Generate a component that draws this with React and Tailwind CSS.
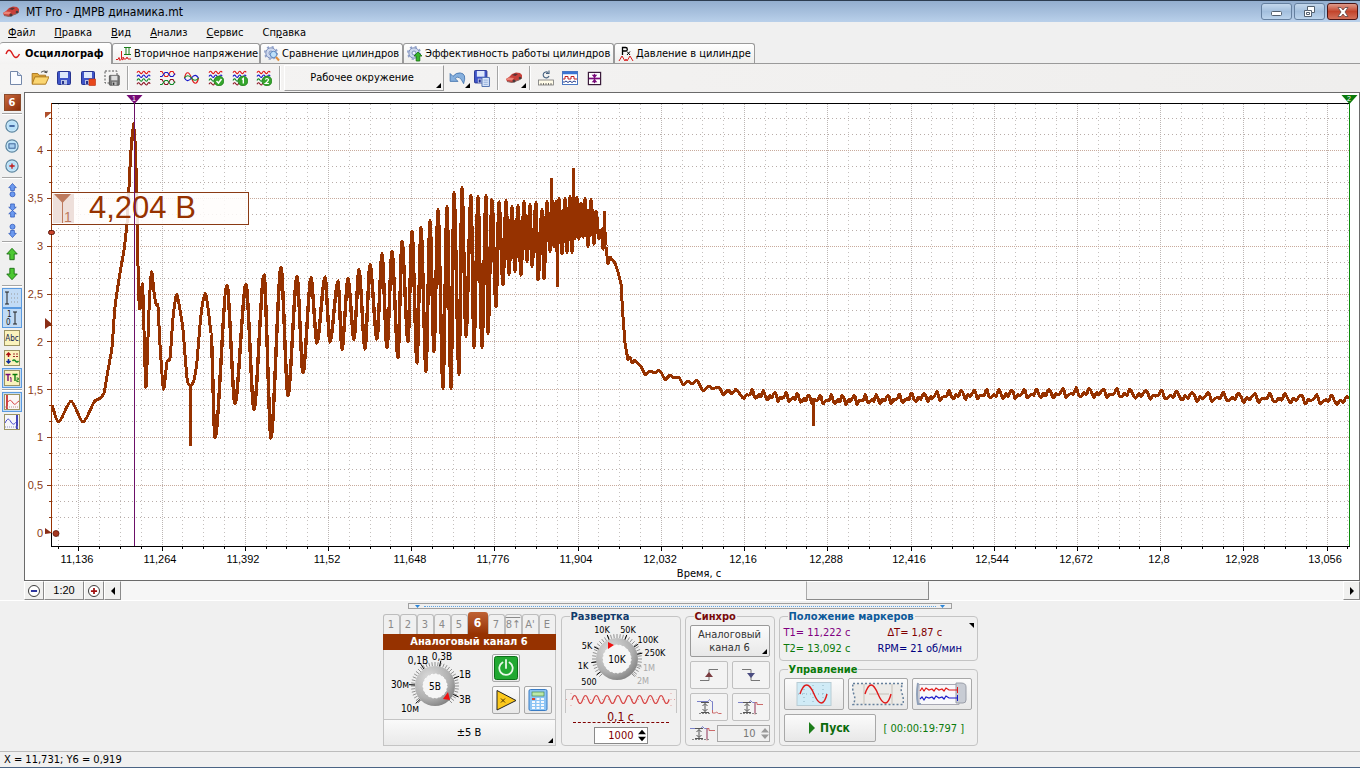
import React from "react";

/* ---------- signal ---------- */
const HEAD = [
  [52, 405], [59, 422], [71, 401], [83, 422], [94, 402], [99, 399], [104, 393], [108, 370], [112, 347],
  [115, 307], [120, 273], [124, 250], [127, 223], [129, 187], [131, 150], [133.500, 123], [135.500, 150],
  [136.500, 190], [137.500, 237], [138.500, 290], [140, 309], [142.500, 284], [144, 330], [146, 387], [149, 310], [151.500, 272],
  [154, 292], [156, 304], [158, 307], [160, 345], [163.500, 389], [167, 362], [170, 358], [173, 318], [176.500, 295], [179, 304], [183, 330],
  [187, 378], [190.500, 386], [194, 380], [197, 361], [201, 315], [205, 294], [207.500, 304], [211, 333],
];
const SWING = [
  [215, 438], [227, 285], [235, 404], [246, 284], [254, 410], [264, 275], [271, 438], [281, 267],
  [288, 396], [297, 276], [303, 373], [311, 278], [317, 343], [325, 277], [330, 342], [338, 281],
  [342, 349], [348, 279], [354, 339], [359, 270], [365, 349], [370, 265], [377, 339], [382, 254],
  [387, 348], [392, 251], [398, 358], [402, 241], [408, 342], [412, 231], [417, 363], [421, 228],
  [426, 371], [430, 221], [434, 351], [438, 210], [443, 388], [447, 207], [451, 388], [454, 193],
  [459, 374], [462, 188], [466, 336], [471, 196], [474, 347], [478, 197], [482, 347], [486, 196],
  [488, 333], [492, 200], [496, 307], [499, 202], [503, 285], [506, 201], [509, 274], [512, 207],
  [515, 271], [518, 206], [521, 275], [524, 202], [527, 261], [530, 205], [532, 266], [536, 203],
  [538, 280], [542, 210], [544, 279], [547, 202], [550, 251], [552, 200], [554, 246], [556, 202],
  [557, 252], [559, 199], [562, 254], [565, 199], [567, 252], [570, 197], [572, 252], [574, 197],
  [575, 238], [577, 198], [579, 239], [581, 203], [583, 237], [585, 199], [588, 246], [591, 200],
  [594, 244], [596, 211], [599, 239], [602, 229], [603, 249], [605, 232], [606, 247],
];
const FALL = [
  [606, 247], [608, 264], [610, 257], [615, 263], [618, 272], [621, 284], [623, 317], [625, 343], [628, 360], [630, 357],
  [632, 363], [635, 360], [638, 364], [641, 366], [645, 375], [650, 371], [655, 373], [659, 370], [662, 374], [665, 380], [670, 375],
  [674, 378], [679, 377], [683, 385], [688, 381], [692, 384], [697, 380], [703, 391], [709, 386], [713, 389],
  [717, 387], [720, 388], [723, 395], [728, 390], [732, 394], [736, 389], [743, 398],
];
const SPIKES = "M190.500 386V446M551.500 178V240M557.500 240V287M573.500 168V240M604.500 211V245M813.500 398V426";
const BASE = [[743, 394], [780, 397], [820, 400], [860, 400], [900, 399], [960, 395], [1040, 394], [1085, 393], [1130, 394], [1200, 397], [1300, 399], [1350, 401]];

function baseline(x) {
  for (let i = 1; i < BASE.length; i++) {
    if (x <= BASE[i][0]) {
      const [x0, y0] = BASE[i - 1];
      const [x1, y1] = BASE[i];
      return y0 + ((x - x0) / (x1 - x0)) * (y1 - y0);
    }
  }
  return 401;
}

function smooth(pts) {
  let d = "M" + pts[0].join(",");
  for (let i = 1; i < pts.length; i++) {
    const a = pts[i - 1];
    const b = pts[i];
    const z = pts[i - 2] || a;
    const n = pts[i + 1] || b;
    d += `C${a[0] + (b[0] - z[0]) / 8},${a[1] + (b[1] - z[1]) / 8} ${b[0] - (n[0] - a[0]) / 8},${b[1] - (n[1] - a[1]) / 8} ${b[0]},${b[1]}`;
  }
  return d;
}

function buildSwing() {
  let prev = HEAD[HEAD.length - 1];
  let d = "M" + prev.join(",");
  SWING.forEach(([x, y]) => {
    const dx = (x - prev[0]) * 0.28;
    d += `C${prev[0] + dx},${prev[1]} ${x - dx},${y} ${x},${y}`;
    prev = [x, y];
  });
  return d;
}

function buildTail() {
  let d = "M" + FALL.map((p) => p.join(",")).join("L");
  let phase = 0;
  for (let x = 744; x < 1350; x += 1) {
    const period = x < 900 ? 11.3 : x < 1050 ? 12.5 : x < 1130 ? 13.5 : 15.5;
    phase += (2 * Math.PI) / period;
    const y = baseline(x) + 2.7 * Math.sin(phase) + 2.2 * Math.sin(phase * 2 + 0.5) + 0.7 * Math.sin(phase * 3.3);
    d += `L${x},${y.toFixed(1)}`;
  }
  return d;
}
const HEAD_PATH = smooth(HEAD);
const SWING_PATH = buildSwing();
const TAIL_PATH = buildTail();

const X_LABELS = ["11,136", "11,264", "11,392", "11,52", "11,648", "11,776", "11,904", "12,032", "12,16", "12,288", "12,416", "12,544", "12,672", "12,8", "12,928", "13,056"];
const Y_LABELS = ["4", "3,5", "3", "2,5", "2", "1,5", "1", "0,5", "0"];
const V_LINES = Array.from({ length: 63 }, (_, i) => ({ x: Math.round(57.5 + i * 20.805), major: i % 4 === 1 })).filter((l) => l.x < 1349);
const H_LINES = Array.from({ length: 27 }, (_, i) => ({ y: Math.round(118 + i * 15.96), major: i % 3 === 2 }));

function Chart() {
  return (
    <svg viewBox="25 93 1334 487" className="block w-full bg-white" role="img" aria-label="Осциллограмма">
      <g shapeRendering="crispEdges" fill="none">
        {V_LINES.map(({ x, major }) => (
          <g key={x}>
            <path d={`M${x + 0.5} 104V546`} stroke={major ? "#bcb6b4" : "#c4c0be"} strokeDasharray={major ? "1 1" : "1 3"} />
            <path d={`M${x + 0.5} 547v${major ? 4 : 2}`} stroke="#000" />
          </g>
        ))}
        {H_LINES.map(({ y, major }) => (
          <g key={y}>
            {y < 530 && <path d={`M52 ${y + 0.5}H1349`} stroke={major ? "#c8aa9c" : "#b8aca8"} strokeDasharray={major ? "1 1" : "1 3"} />}
            {y < 530 && <path d={`M${major ? 47 : 49} ${y + 0.5}H52`} stroke="#8a3a14" />}
          </g>
        ))}
        <path d="M51 103.5H1350M51 546.5H1350M51.5 533V547" stroke="#000" />
        <path d="M51.5 103V533" stroke="#963200" />
        <g stroke="#963200" strokeWidth="3" strokeLinejoin="round">
          <path d={HEAD_PATH} />
          <path d={SWING_PATH} strokeWidth="3.400" />
          <path d={TAIL_PATH} />
          <path d={SPIKES} />
        </g>
      </g>

      <rect x="51.5" y="192.5" width="197" height="32" fill="#fffdfc" fillOpacity="0.86" stroke="#8a3a14" shapeRendering="crispEdges" />
      <rect x="53" y="194" width="21" height="29" fill="#eedfda" />
      <path d="M54 194h17l-8.500 9z" fill="#bd7a5e" />
      <path d="M62.500 200V223" stroke="#bd7a5e" />
      <g className="font-['Liberation_Sans',Arial,sans-serif]">
        <text x="64" y="222" fontSize="14" fill="#bd7a5e">1</text>
        <text x="89" y="218" fontSize="31" fill="#963200">4,204 В</text>
        {X_LABELS.map((t, i) => (
          <text key={t} x={Math.round(77 + i * 83.22)} y="563" fontSize="11" textAnchor="middle" fill="#000">{t}</text>
        ))}
        {Y_LABELS.map((t, i) => (
          <text key={t} x="43" y={Math.round(154 + i * 47.9)} fontSize="11" textAnchor="end" fill="#8a3a14">{t}</text>
        ))}
      </g>
      <text x="699" y="577" fontSize="11" textAnchor="middle">Время, с</text>

      <path d="M134.500 103V546" stroke="#6c1168" shapeRendering="crispEdges" />
      <path d="M1349.500 103V546" stroke="#0a8a0a" shapeRendering="crispEdges" />
      <path d="M126.500 95h16l-8 9z" fill="#750a75" />
      <path d="M1341.500 95h16l-8 9z" fill="#0a7a0a" />
      <g fontSize="7" fill="#fff" textAnchor="middle" className="font-['Liberation_Sans',Arial,sans-serif]">
        <text x="134" y="101">1</text>
        <text x="1349" y="101">2</text>
      </g>
      <path d="M45 112h7l-7 6z" fill="#b0502c" />
      <path d="M45 318l7 6-7 5z" fill="#8a2e16" />
      <path d="M45 528l7 5-7 1z" fill="#8a2e16" />
      <rect x="48.500" y="230.500" width="6" height="4" rx="2" fill="#c8442c" stroke="#5a160a" />
      <circle cx="56" cy="533.500" r="3" fill="#a83a22" stroke="#5a160a" strokeWidth="0.8" />
    </svg>
  );
}

/* ---------- icons ---------- */
const Svg = ({ s = 16, children }) => (
  <svg width={s} height={s} viewBox="0 0 16 16" className="block shrink-0" fill="none" aria-hidden="true">{children}</svg>
);
const CarIcon = () => (
  <svg width="18" height="14" viewBox="0 0 18 14" className="block shrink-0" aria-hidden="true">
    <path d="M1 8l3-2 3-3 4-1.500 4 .5 2 2v3l-3 2-7 2.500-5-1z" fill="#c8403a" />
    <path d="M7 4l3-1.500 3 .5-2.500 2z" fill="#5a3236" />
    <path d="M1 8l3-1.500 5 .5-2 2.500-5-.5z" fill="#ea8478" />
    <path d="M2 10.500l5 1L14 9l3-2" stroke="#8a6a66" strokeWidth="1" fill="none" />
    <circle cx="9" cy="10" r="1.500" fill="#4a3a3a" /><circle cx="15" cy="7" r="1.300" fill="#4a3a3a" />
  </svg>
);
const WAVE = "q1.400-2.800 2.800-.4t2.600 0 2.600 0 2.600 0 2.600 0";
const Waves = ({ rows = ["#e01818", "#1818c8", "#108a28", "#8a1020"] }) => (
  <>
    {rows.map((c, i) => <path key={i} d={`M1 ${2.800 + i * 3.800}${WAVE}`} stroke={c} strokeWidth="1.100" />)}
  </>
);
const Badge = ({ children }) => (
  <>
    <circle cx="11" cy="11" r="4.900" fill="#35a52c" stroke="#1c7d1a" strokeWidth="0.700" />
    {children}
  </>
);
const Floppy = ({ x = 1, y = 1, k = 1, gray }) => (
  <g transform={`translate(${x} ${y}) scale(${k})`}>
    <rect x="0.500" y="0.500" width="13" height="13" rx="1" fill={gray ? "#777" : "#3f55c8"} stroke={gray ? "#444" : "#27348f"} />
    <rect x="3" y="1" width="8" height="6" fill={gray ? "#ddd" : "#dde8fb"} />
    <rect x="4" y="9" width="6" height="4.500" fill={gray ? "#bbb" : "#bac4e6"} />
    <rect x="5" y="10" width="2" height="3" fill={gray ? "#333" : "#27348f"} />
  </g>
);
const Gear = () => (
  <>
    <circle cx="7" cy="7" r="5.200" fill="#cdd8ee" stroke="#7e90bb" strokeWidth="1" />
    <circle cx="7" cy="7" r="6.200" stroke="#8fa0c8" strokeWidth="1.600" strokeDasharray="2.200 2.660" />
    <circle cx="7" cy="7" r="2" fill="#eef3fb" stroke="#7e90bb" />
  </>
);
const I = {
  sine: <Svg><path d="M1 8c2-5 4-5 6.500 0s4.500 4.500 7 0" stroke="#d81c1c" strokeWidth="1.400" /></Svg>,
  second: <Svg><path d="M0 13.500h2l1-2 1 3 1.500-1.500V5M5.500 13l1.500 1v-3l1 2h2l1-2 1 2h3" stroke="#d81c1c" /><path d="M8 1.500h7M8 8.500h7M10 2v6M13 2v6" stroke="#1c7d1a" /></Svg>,
  compare: <Svg><Gear /><circle cx="9.500" cy="8.500" r="3.200" fill="#bfe1fa" stroke="#5683bd" /><path d="M12 11l3 3.500" stroke="#e08c3a" strokeWidth="2" /></Svg>,
  effect: <Svg><Gear /><path d="M11 6l4 4h-2.200v5H9.200v-5H7z" fill="#38b52c" stroke="#14700f" strokeWidth="0.800" /></Svg>,
  press: <Svg><path d="M4.500 9V1.500h3q1.800 0 1.800 1.800T7.500 5H5" stroke="#000" strokeWidth="1.300" /><path d="M9 5.500l3 3.500m0-3.500L9 9" stroke="#000" /><path d="M1 15l3-5 3 5 1-2 1 2 3-5 3 5" stroke="#d81c1c" /></Svg>,
  fresh: <Svg><path d="M2.500 1.500h7l4 4v9h-11z" fill="#fafcff" stroke="#7488aa" /><path d="M9.500 1.500v4h4" fill="#d5e0f2" stroke="#7488aa" /></Svg>,
  open: <Svg s={18}><path d="M1 4h5l1 1.500h6V13H1z" fill="#e2ab3c" stroke="#a8741c" strokeWidth="0.800" /><path d="M3.500 7H16l-3 6.500H1z" fill="#fbd672" stroke="#a8741c" strokeWidth="0.800" /><path d="M9 3c2-2 4-1.500 5 0l.5-1.500M14 3h-2" stroke="#555" strokeWidth="0.900" /></Svg>,
  save: <Svg><Floppy /></Svg>,
  saveRed: <Svg><Floppy /><rect x="9" y="9" width="6.500" height="6.500" fill="#e8481c" stroke="#b82c0c" strokeWidth="0.600" /></Svg>,
  saveSel: <Svg><rect x="1" y="1" width="12" height="12" stroke="#555" strokeDasharray="2 1.500" /><Floppy x={5} y={5} k={0.760} gray /></Svg>,
  w1: <Svg><Waves /></Svg>,
  w2: <Svg><path d="M0 1.500h2l3 5h2.500l3-5H13l2 3.500" stroke="#e01818" strokeWidth="1.100" /><path d="M0 6.500h2l3-4h2.500l3 4H13l2-3" stroke="#1818c8" strokeWidth="1.100" /><path d="M0 9.500h2l3 5h2.500l3-5H13l2 3.500" stroke="#8a1020" strokeWidth="1.100" /><path d="M0 14.500h2l3-4h2.500l3 4H13l2-3" stroke="#108a28" strokeWidth="1.100" /></Svg>,
  w3: <Svg><path d="M0.500 8C2 1 5 1 7.500 8s5.500 7 7 0" stroke="#e01818" strokeWidth="1.200" /><path d="M0.500 8c1.500 3 4 4 7 0s5-3 7 0" stroke="#1818c8" strokeWidth="1.200" /><path d="M0.500 8c1.500-3 5-3 7 0s5 3 7 0" stroke="#108a28" strokeWidth="1.200" /></Svg>,
  w4: <Svg><Waves /><Badge><path d="M8.500 11l2 2 3-4" stroke="#fff" strokeWidth="1.500" /></Badge></Svg>,
  w5: <Svg><Waves /><Badge><path d="M10 9.500l1.300-1v5" stroke="#fff" strokeWidth="1.400" /></Badge></Svg>,
  w6: <Svg><Waves /><Badge><path d="M9.300 9.500q1.700-2 3.200 0 0 1.500-3.200 4h3.600" stroke="#fff" strokeWidth="1.200" /></Badge></Svg>,
  undo: <Svg s={18}><path d="M1 4v7h7L5.500 8.500Q9 4.500 13 13q3-9-3-9.500Q6.500 3 3.500 6.500z" fill="#86b0de" stroke="#3a6ca8" strokeWidth="0.700" /></Svg>,
  saveCopy: <Svg s={17}><Floppy x={0} y={0} k={0.900} /><path d="M7.500 7h7v8.500h-7z" fill="#dbe8fb" stroke="#4a6cab" strokeWidth="0.900" /><path d="M9 9.500h4M9 11.500h4M9 13.500h4" stroke="#86a3d3" strokeWidth="0.800" /></Svg>,
  ruler: <Svg><rect x="0.500" y="10" width="15" height="5" fill="#fffbe8" stroke="#777" strokeWidth="0.800" /><path d="M3 15v-2M5.500 15v-2M8 15v-2M10.500 15v-2M13 15v-2" stroke="#555" strokeWidth="0.800" /><path d="M10 2.500A3 3 0 1 0 11 6M11 0.500v3H8" stroke="#46617f" strokeWidth="1.100" /></Svg>,
  square: <Svg><rect x="0.500" y="1.500" width="15" height="13" fill="#fff" stroke="#4a76c0" /><path d="M1 3h14" stroke="#3b74d2" strokeWidth="2.500" /><path d="M1 9h2V6.500h3V9h3V6.500h3V9h3" stroke="#c02020" /><path d="M1 12h1.500l1.500-1 2 1.500 2-1.500 2 1.500 2-1.500 2 1" stroke="#203a8a" /></Svg>,
  fit: <Svg s={15}><rect x="1.500" y="1.500" width="13" height="13" fill="#fff" stroke="#3a1c3a" strokeWidth="1.300" /><path d="M2 8h12" stroke="#7a0a7a" strokeWidth="1.800" /><path d="M8 3v10" stroke="#7a0a7a" strokeWidth="1.400" /><path d="M5 4h6L8 7.500zM5 12h6L8 8.500z" fill="#7a0a7a" /></Svg>,
};
const lens = (inner) => (
  <Svg s={14}><circle cx="8" cy="8" r="7" fill="#cfeafb" stroke="#5c86a0" strokeWidth="1.400" /><circle cx="8" cy="8" r="5.300" fill="#b7e0f8" />{inner}</Svg>
);
const blue = { fill: "#6c9af0", stroke: "#2c55b8", strokeWidth: "0.800" };
const page = (inner, fill = "#fbf3bd") => (
  <Svg><rect x="0.500" y="0.500" width="15" height="15" fill={fill} stroke="#9c9464" />{inner}</Svg>
);
const SIDE = [
  [
    ["Уменьшить", lens(<path d="M5 8h6" stroke="#183a80" strokeWidth="1.600" />)],
    ["Вписать", lens(<rect x="4.500" y="5.500" width="7" height="5" fill="#a8d0f0" stroke="#31568c" />)],
    ["Увеличить", lens(<path d="M5 8h6M8 5v6" stroke="#c01818" strokeWidth="1.500" />)],
  ],
  [
    ["Растянуть", <Svg s={15}><path d="M8 0.500L12 5h-2v3H6V5H4z" {...blue} /><circle cx="8" cy="12" r="2.700" {...blue} /></Svg>],
    ["Сжать", <Svg s={15}><path d="M8 8L4 4.500h2V1h4v3.500h2zM8 8l4 3.500h-2V15H6v-3.500H4z" {...blue} /></Svg>],
    ["Сдвинуть", <Svg s={15}><path d="M8 15.500L12 11h-2V8H6v3H4z" {...blue} /><circle cx="8" cy="4" r="2.700" {...blue} /></Svg>],
  ],
  [
    ["Вверх", <Svg s={14}><path d="M8 1.500L14 8h-3.500v6.500h-5V8H2z" fill="#4cc832" stroke="#186c10" /></Svg>],
    ["Вниз", <Svg s={14}><path d="M8 14.500L14 8h-3.500V1.500h-5V8H2z" fill="#4cc832" stroke="#186c10" /></Svg>],
  ],
  [
    ["Сетка", <Svg><path d="M1 2h4M1 14h4M3 2v12" stroke="#222" /><path d="M7 4h8M7 8h8M7 12h8" stroke="#999" strokeDasharray="1 2" /></Svg>, true],
    ["Шкала", <Svg><path d="M9 2h4M9 14h4M11 2v12" stroke="#222" /><text x="3" y="7" fontSize="8" fill="#222">1</text><text x="2" y="15" fontSize="8" fill="#222">0</text></Svg>, true],
    ["Подписи", page(<text x="8" y="11" fontSize="8" textAnchor="middle" fill="#101a50">Abc</text>)],
    ["Уровни", page(<><path d="M4.500 7V3M2.500 5l2-2 2 2" stroke="#b01010" strokeWidth="1.500" /><path d="M4.500 9v4M2.500 11l2 2 2-2" stroke="#102a9a" strokeWidth="1.500" /><path d="M9 4h5M9 6.500h5" stroke="#a03030" strokeDasharray="2 1" /><path d="M8.500 11q1.500-2 3 0t3 0" stroke="#108a28" strokeWidth="1.300" /></>)],
    ["Маркеры времени", page(<><path d="M1.500 4.500h5M4 4v7" stroke="#750a75" strokeWidth="1.400" /><path d="M6 8l1-.5V12" stroke="#750a75" /><path d="M8.500 4.500h5M11 4v7" stroke="#0a7a0a" strokeWidth="1.400" /><path d="M12.500 8h1.800v1.800h-1.500v1.800h2" stroke="#0a7a0a" strokeWidth="0.900" /></>), true],
  ],
  [
    ["Красный курсор", page(<><path d="M3 1v14" stroke="#c01818" strokeWidth="1.600" /><path d="M3 9c3-4 4-3 6 0s3 0 6-2" stroke="#d84040" /><path d="M1 13h14" stroke="#c09090" strokeDasharray="1 1" /></>, "#fbf6f6"), true],
    ["Синий курсор", page(<><path d="M13 1v14" stroke="#1818a8" strokeWidth="1.600" /><path d="M1 9c3-6 4-4 6-1s3 3 6-1" stroke="#4848c8" /><path d="M1 13h14" stroke="#9090c0" strokeDasharray="1 1" /></>, "#f6f6fb")],
  ],
];

/* ---------- bars ---------- */
const MENU = [["", "Ф", "айл"], ["", "П", "равка"], ["", "В", "ид"], ["", "А", "нализ"], ["", "С", "ервис"], ["Сп", "р", "авка"]];
const Corner = () => <span className="absolute right-[2px] bottom-[2px] h-0 w-0 border-b-[5px] border-l-[5px] border-b-black border-l-transparent" />;
const Sep = () => <span className="mx-[3px] h-6 w-[2px] border-l border-[#a5a5a5] bg-white" />;
const Tool = ({ icon, label, corner }) => (
  <button aria-label={label} className="relative flex h-6 w-6 items-center justify-center">
    {icon}
    {corner && <span className="absolute right-0 bottom-[2px] h-0 w-0 border-b-[5px] border-l-[5px] border-b-black border-l-transparent" />}
  </button>
);

const winBtn = "flex w-[31px] items-center justify-center rounded-[3px] border border-[#65809f] bg-gradient-to-b from-[#c3d7ec] via-[#a3bfdd] to-[#bcd4ec]";
function TitleBar() {
  return (
    <header className="flex h-[22px] items-center gap-1 border-t border-[#2c3c50] bg-gradient-to-b from-[#93aecf] to-[#b9d0ea] pr-[2px] pl-[2px]">
      <CarIcon />
      <h1 className="ml-[2px] flex-1 text-[12px] leading-4">MT Pro - ДМРВ динамика.mt</h1>
      <div className="flex h-[17px] gap-[2px]">
        <button aria-label="Свернуть" className={winBtn}>
          <svg width="12" height="6" viewBox="0 0 12 6" className="mt-[4px]"><rect x="0.500" y="0.500" width="10" height="4" rx="1" fill="#fff" stroke="#53606e" /></svg>
        </button>
        <button aria-label="Восстановить" className={winBtn}>
          <svg width="13" height="12" viewBox="0 0 13 12"><path d="M4.500 0.500h7v6h-3v4h-7v-6h3z" fill="#fff" stroke="#53606e" /><path d="M4.500 4.500h4v2M3.500 6.500h3v2h-3z" fill="none" stroke="#53606e" /></svg>
        </button>
        <button aria-label="Закрыть" className="flex w-[31px] items-center justify-center rounded-[3px] border border-[#4a1414] bg-gradient-to-b from-[#dd9a8b] via-[#c2442c] to-[#d2705a]">
          <svg width="12" height="10" viewBox="0 0 12 10"><path d="M1 .5h3l2 2.500 2-2.500h3L8 5l3 4.500H8L6 7 4 9.500H1L4 5z" fill="#fff" stroke="#5f4444" strokeWidth="0.800" /></svg>
        </button>
      </div>
    </header>
  );
}

const tabBase = "flex h-5 items-center gap-[2px] rounded-t-[3px] border border-b-0 border-[#9a9a9a] pl-[3px] bg-gradient-to-b from-white to-[#eeeeec] whitespace-nowrap";
function Tabs() {
  return (
    <nav className="flex h-[21px] items-end border-b border-[#9a9a9a]" role="tablist">
      <button role="tab" aria-selected="true" className="-mb-px flex h-[22px] w-[112px] items-center gap-1 rounded-t-[3px] border border-b-0 border-l-0 border-[#9a9a9a] bg-gradient-to-b from-white to-[#f4f3f2] pl-[5px] font-bold whitespace-nowrap">{I.sine}Осциллограф</button>
      <button role="tab" aria-selected="false" className={`${tabBase} w-[148px]`}>{I.second}Вторичное напряжение</button>
      <button role="tab" aria-selected="false" className={`${tabBase} w-[143px]`}>{I.compare}Сравнение цилиндров</button>
      <button role="tab" aria-selected="false" className={`${tabBase} w-[211px]`}>{I.effect}Эффективность работы цилиндров</button>
      <button role="tab" aria-selected="false" className={`${tabBase} w-[141px]`}>{I.press}Давление в цилиндре</button>
    </nav>
  );
}

function Toolbar() {
  return (
    <div className="flex h-7 items-center bg-gradient-to-r from-[#f5f4f3] to-[#efeeed] pl-1">
      <Tool icon={I.fresh} label="Новый" />
      <Tool icon={I.open} label="Открыть" />
      <Tool icon={I.save} label="Сохранить" />
      <Tool icon={I.saveRed} label="Сохранить как" />
      <Tool icon={I.saveSel} label="Сохранить фрагмент" />
      <Sep />
      <Tool icon={I.w1} label="Каналы" />
      <Tool icon={I.w2} label="Пары" />
      <Tool icon={I.w3} label="Наложение" />
      <Tool icon={I.w4} label="Выбранные" />
      <Tool icon={I.w5} label="Набор 1" />
      <Tool icon={I.w6} label="Набор 2" />
      <Sep />
      <button className="relative h-[26px] w-[160px] border-t border-r border-b border-l border-[#9a9a9a] border-t-white border-l-white pr-1 pb-[2px]">Рабочее окружение<Corner /></button>
      <span className="w-[2px]" />
      <Tool icon={I.undo} label="Отменить" corner />
      <Tool icon={I.saveCopy} label="Сохранить окружение" />
      <Sep />
      <Tool icon={<CarIcon />} label="Автомобиль" corner />
      <Sep />
      <Tool icon={I.ruler} label="Линейка" />
      <Tool icon={I.square} label="Логика" />
      <Tool icon={I.fit} label="По высоте" />
    </div>
  );
}

function SideBar() {
  return (
    <aside className="flex w-6 shrink-0 flex-col items-center">
      <div className="flex h-5 items-center">
        <button className="h-[17px] w-[17px] border border-[#8a4a2c] bg-gradient-to-br from-[#c8683c] to-[#8c2c04] text-[11px] leading-[13px] font-bold text-white">6</button>
      </div>
      {SIDE.map((group, g) => (
        <div key={g} className="flex w-full flex-col items-center">
          <span className="my-[1px] h-[2px] w-5 border-t border-[#a5a5a5] bg-white" />
          {group.map(([label, icon, on]) => (
            <button key={label} aria-label={label} aria-pressed={!!on} className={`flex h-5 w-5 items-center justify-center ${on ? "border border-[#5a9ae0] bg-[#c2dbf5]" : ""}`}>{icon}</button>
          ))}
        </div>
      ))}
    </aside>
  );
}

const smallBtn = "flex items-center justify-center border border-[#8a8a8a] border-t-white border-l-white bg-[#f0f0ef]";
function ScrollRow() {
  return (
    <div className="flex h-[19px] items-stretch bg-[#f6f6f6]">
      <button aria-label="Уменьшить масштаб" className={`${smallBtn} w-5`}><Svg s={14}><circle cx="8" cy="8" r="6.300" fill="#fff" stroke="#222" /><path d="M4.500 8h7" stroke="#101a90" strokeWidth="2" /></Svg></button>
      <button className={`${smallBtn} w-10 font-['Liberation_Sans',Arial,sans-serif] text-[11px]`}>1:20</button>
      <button aria-label="Увеличить масштаб" className={`${smallBtn} w-5`}><Svg s={14}><circle cx="8" cy="8" r="6.300" fill="#fff" stroke="#222" /><path d="M4.500 8h7M8 4.500v7" stroke="#a01010" strokeWidth="2" /></Svg></button>
      <button aria-label="Влево" className={`${smallBtn} w-[17px]`}><svg width="4" height="8" viewBox="0 0 4 8"><path d="M4 0v8L0 4z" /></svg></button>
      <div className="grid flex-1 grid-cols-[685fr_123fr_414fr]">
        <span />
        <button aria-label="Прокрутка" className="border border-[#8a8a8a] border-t-white border-l-[#aaa] bg-[#f0f0f0]" />
      </div>
      <button aria-label="Вправо" className={`${smallBtn} w-[17px]`}><svg width="4" height="8" viewBox="0 0 4 8"><path d="M0 0v8l4-4z" /></svg></button>
    </div>
  );
}

/* ---------- control panels ---------- */
const rad = (a) => (a * Math.PI) / 180;
function Ticks({ cx, cy, r, from, to }) {
  const out = [];
  for (let a = from; a <= to; a += 7.5) {
    const c = Math.cos(rad(a));
    const s = Math.sin(rad(a));
    out.push(<path key={a} d={`M${cx + c * r} ${cy + s * r}L${cx + c * (r + 4)} ${cy + s * (r + 4)}`} stroke="#777" strokeWidth="0.800" />);
  }
  return out;
}
function Knob({ cx, cy, r, inner, value }) {
  return (
    <>
      <circle cx={cx} cy={cy} r={r} fill="url(#knob)" />
      <circle cx={cx} cy={cy} r={inner} fill="#f6f6f6" stroke="#fff" strokeDasharray="2 2" />
      <text x={cx} y={cy + 4} textAnchor="middle" fontSize="10">{value}</text>
    </>
  );
}
const Leg = ({ cx, cy, r, angles, color = "#000" }) => angles.map((a) => (
  <path key={a} d={`M${cx + Math.cos(rad(a)) * r} ${cy + Math.sin(rad(a)) * r}L${cx + Math.cos(rad(a)) * (r + 6)} ${cy + Math.sin(rad(a)) * (r + 6)}`} stroke={color} />
));

const panelBtn = "flex items-center justify-center rounded-[2px] border border-[#a8a8a8] bg-gradient-to-b from-[#fbfbfb] to-[#e8e8e8]";
const CHANNELS = ["1", "2", "3", "4", "5", "6", "7", "8↑", "A'", "E"];
function ChannelPanel() {
  return (
    <section className="flex w-[173px] flex-col">
      <div className="flex h-[22px] items-end" role="tablist">
        {CHANNELS.map((c) =>
          c === "6" ? (
            <button key={c} role="tab" aria-selected="true" className="h-[22px] w-5 rounded-t-[3px] bg-gradient-to-b from-[#bf6234] to-[#963200] text-[12px] font-bold text-white">6</button>
          ) : (
            <button key={c} role="tab" aria-selected="false" className={`h-5 w-[17px] rounded-t-[3px] border border-b-0 border-[#bdbdbd] text-[11px] text-[#8a8a8a] ${c === "8↑" ? "overline" : ""}`}>{c}</button>
          )
        )}
      </div>
      <h2 className="h-4 bg-[#963200] text-center text-[11px] leading-4 font-bold text-white">Аналоговый канал 6</h2>
      <div className="flex h-[69px] border-x border-[#c4c4c4]">
        <svg width="106" height="68" viewBox="384 651 106 68" className="shrink-0" role="img" aria-label="Диапазон">
          <defs>
            <radialGradient id="knob" cx="0.350" cy="0.300" r="0.850"><stop offset="0" stopColor="#dcdcdc" /><stop offset="0.600" stopColor="#b0b0b0" /><stop offset="1" stopColor="#6f6f6f" /></radialGradient>
          </defs>
          <Ticks cx={435} cy={687} r={20} from={135} to={405} />
          <Leg cx={435} cy={687} r={20} angles={[138, 183, 237, 283, 338, 385]} />
          <Knob cx={435} cy={687} r={20} inner={12} value="5В" />
          <path d="M448 693l2 8-7-1z" fill="#f01010" />
          <g fontSize="10" textAnchor="middle">
            <text x="410" y="713">10м</text><text x="400" y="689">30м</text><text x="418" y="665">0,1В</text>
            <text x="442" y="661">0,3В</text><text x="465" y="679">1В</text><text x="465" y="704">3В</text>
          </g>
        </svg>
        <div className="mt-1 ml-[2px] grid h-[60px] grid-cols-[28px_28px] grid-rows-[28px_28px] gap-1">
          <button aria-label="Питание канала" className={`${panelBtn} p-[1px]`}>
            <svg width="24" height="24" viewBox="0 0 24 24" fill="none"><rect x="0.500" y="0.500" width="23" height="23" rx="2" fill="#22a832" stroke="#0c7018" /><path d="M8.500 6.500a6.700 6.700 0 1 0 7 0M12 4v8" stroke="#e8f8e8" strokeWidth="1.800" strokeLinecap="round" /></svg>
          </button>
          <span />
          <button aria-label="Усилитель" className={panelBtn}><svg width="24" height="24" viewBox="0 0 24 24"><path d="M3 2.500L22 12.500 3 22z" fill="#fbc81c" stroke="#222" /><path d="M7 10.500l4 4m0-4l-4 4" stroke="#4a3000" /></svg></button>
          <button aria-label="Калькулятор" className={panelBtn}>
            <svg width="20" height="22" viewBox="0 0 20 22"><rect x="1" y="0.500" width="18" height="21" rx="1.500" fill="#8cc4f4" stroke="#3a7cc4" /><rect x="4" y="3" width="12" height="4" fill="#bce8a8" stroke="#4a8c50" strokeWidth="0.700" />{[9, 12, 15, 18].map((y) => [4, 8.500, 13].map((x) => <rect key={`${x}-${y}`} x={x} y={y} width="3" height="2" fill={x < 5 && y < 10 ? "#d84030" : "#f4f8fd"} />))}</svg>
          </button>
        </div>
      </div>
      <button className="relative h-[27px] border border-[#c4c4c4] bg-gradient-to-b from-[#fafafa] to-[#e9e9e9]">±5 В<Corner /></button>
    </section>
  );
}

const field = "rounded-[4px] border border-[#c4c4c4]";
const legend = "px-[1px] text-[11px] leading-[13px] font-bold";
function SweepPanel() {
  return (
    <fieldset className={`${field} flex w-[120px] flex-col`}>
      <legend className={`${legend} ml-2 text-[#123c6c]`}>Развертка</legend>
      <svg width="118" height="66" viewBox="562 624 118 66" className="block" role="img" aria-label="Частота развертки">
        <Ticks cx={617} cy={660} r={21} from={135} to={405} />
        <Leg cx={617} cy={660} r={20} angles={[142, 172, 208, 248, 292, 325, 347]} />
        <Leg cx={617} cy={660} r={20} angles={[18, 42]} color="#aaa" />
        <Knob cx={617} cy={660} r={21} inner={14} value="10K" />
        <path d="M608 643l6 3-6 4z" fill="#f01010" />
        <g fontSize="9" textAnchor="middle">
          <text x="602" y="634">10K</text><text x="628" y="634">50K</text><text x="587" y="650">5K</text><text x="648" y="644">100K</text>
          <text x="655" y="657">250K</text><text x="583" y="670">1K</text><text x="589" y="686">500</text>
          <text x="649" y="672" fill="#aaa">1M</text><text x="643" y="685" fill="#aaa">2M</text>
        </g>
      </svg>
      <svg width="112" height="24" viewBox="0 0 112 24" className="mx-auto block" fill="none" aria-hidden="true">
        <path d="M0.500 24V0.500h111V24" stroke="#c4c4c4" />
        <rect x="1" y="1" width="110" height="17" fill="#f2efee" />
        <path d="M6 4v14M106 4v14M1 10.500h110" stroke="#e0a0a0" strokeDasharray="1 5" />
        <path d={"M7 10.500q2.700-8 5.400 0t5.400 0" + " 5.400 0".repeat(16)} stroke="#d84848" strokeWidth="1.200" />
      </svg>
      <div className="mx-auto w-24 border-b border-dashed border-b-[#800000] text-center text-[12px] leading-[9px] text-[#800000]">0,1 с</div>
      <div className="mx-auto mt-1 flex h-[17px] w-[54px] border border-[#8a8a8a] bg-white">
        <input aria-label="Длительность" defaultValue="1000" className="w-[39px] text-right text-[11px] text-[#800000]" />
        <svg width="9" height="13" viewBox="0 0 9 13" className="m-[1px] ml-1"><path d="M0 5l4.500-5L9 5zM0 8l4.500 5L9 8z" /></svg>
      </div>
    </fieldset>
  );
}

const syncBtn = "flex h-7 items-center justify-center rounded-[2px] border border-[#c0c0c0] bg-[#f3f3f3]";
const Pulse = ({ wide }) => (
  <svg width="26" height="18" viewBox="0 0 26 18" fill="none" aria-hidden="true">
    {wide ? (
      <>
        <path d="M0 4.500h11l1.500-2 2 2h2.500V15" stroke="#7a80c8" />
        <path d="M17 16.500V4.500h2v2h6" stroke="#cc6a6a" />
        <path d="M2 15.500h18" stroke="#888" strokeDasharray="2 1" />
      </>
    ) : (
      <>
        <path d="M1 3.500h11l1.500-2 2 2h1V12" stroke="#7a80c8" />
        <path d="M16.500 12v3h3l1-1 2 1.500h3" stroke="#cc6a6a" />
        <path d="M3 15.500h11" stroke="#888" strokeDasharray="2 1" />
      </>
    )}
    <path d="M9 5.500v8M6.500 8L9 5.500 11.500 8M6.500 11L9 13.500l2.500-2.500M5 4.500h8M5 14.500h8" stroke="#555" />
  </svg>
);
function SyncPanel() {
  return (
    <fieldset className={`${field} w-[90px] px-1`}>
      <legend className={`${legend} ml-1 text-[#7a0a0a]`}>Синхро</legend>
      <button className="relative mt-[2px] h-8 w-full rounded-[2px] border border-[#9a9a9a] bg-gradient-to-b from-[#fbfbfb] to-[#e8e8e8] text-[11px] leading-[13px] text-[#333]">Аналоговый<br />канал 6<Corner /></button>
      <div className="mt-1 grid grid-cols-2 gap-1">
        <button aria-label="Фронт" className={syncBtn}><svg width="20" height="16" viewBox="0 0 20 16"><path d="M1 13.500h9V2.500h9" fill="none" stroke="#777" /><path d="M10 5l4 5H6z" fill="#7a3c40" /></svg></button>
        <button aria-label="Спад" className={syncBtn}><svg width="20" height="16" viewBox="0 0 20 16"><path d="M1 2.500h9v11h9" fill="none" stroke="#777" /><path d="M10 11l4-5H6z" fill="#4a4c80" /></svg></button>
        <button aria-label="Уровень спада" className={syncBtn}><Pulse /></button>
        <button aria-label="Уровень импульса" className={syncBtn}><Pulse wide /></button>
      </div>
      <div className="mt-[3px] flex items-center gap-[1px]">
        <Pulse wide />
        <div className="flex h-[17px] flex-1 items-center border border-[#a8a8a8] bg-[#f0f0f0]">
          <input aria-label="Порог" defaultValue="10" disabled className="w-[38px] text-right text-[11px] text-[#777]" />
          <svg width="8" height="11" viewBox="0 0 8 11" className="ml-[5px]" fill="#9a9a9a"><path d="M0 4.500L4 0l4 4.500zM0 6.500L4 11l4-4.500z" /></svg>
        </div>
      </div>
    </fieldset>
  );
}

const Film = ({ children, w = 36 }) => <svg width={w} height="24" viewBox={`0 0 ${w} 24`} fill="none" aria-hidden="true">{children}</svg>;
function RightPanels() {
  return (
    <div className="flex w-[199px] flex-col gap-[2px]">
      <fieldset className={`${field} relative h-[51px] px-1`}>
        <legend className={`${legend} ml-1 text-[#0c5a9a]`}>Положение маркеров</legend>
        <span className="absolute top-0 right-[3px] h-0 w-0 border-t-[5px] border-l-[5px] border-t-black border-l-transparent" />
        <dl className="mt-[3px] grid grid-cols-[94px_1fr] gap-y-[3px] text-[11px] leading-[13px]">
          <dd className="text-[#800080]">T1= 11,222 с</dd>
          <dd className="pl-[10px] text-[#800000]">∆T= 1,87 с</dd>
          <dd className="text-[#0a7a0a]">T2= 13,092 с</dd>
          <dd className="whitespace-nowrap text-[#000080]">RPM= 21 об/мин</dd>
        </dl>
      </fieldset>
      <fieldset className={`${field} flex-1 px-1`}>
        <legend className={`${legend} ml-1 text-[#0a7a0a]`}>Управление</legend>
        <div className="mt-[2px] grid grid-cols-3 gap-1">
          <button aria-label="Один кадр" className={`${panelBtn} h-8`}><Film><rect x="1" y="0.500" width="34" height="23" fill="#d0ebf6" stroke="#b8ccd4" /><path d="M8 3v18M17 3v18M27 3v18M2 12h32" stroke="#8ab0c0" strokeDasharray="1 3" /><path d="M4 12C8 0 13 0 18 12s10 12 13 0" stroke="#e01818" strokeWidth="1.400" /></Film></button>
          <button aria-label="Лента" className={`${panelBtn} h-8`}><Film w={52}><path d="M1 1.500h50q-3 5-1 10t1 11H1q3-5 1-10t-1-11z" fill="#ecebe8" stroke="#66809c" strokeWidth="1.500" strokeDasharray="2 2" /><path d="M12 2v20M40 2v20M17 12h20" stroke="#c4c0b8" /><path d="M13 12C17 0 21 0 26 12s10 12 13 0" stroke="#e01818" strokeWidth="1.400" /></Film></button>
          <button aria-label="Запись" className={`${panelBtn} h-8`}><Film w={52}><path d="M3 2.500h40v20H3z" fill="#f8f8fb" stroke="#a8a8b4" /><path d="M40 1h5q5 0 5 4v13q0 3-3 3h-7z" fill="#c8ccd4" stroke="#9a9ea8" /><path d="M2 1q-2 12 0 21h3" stroke="#90a0b8" strokeWidth="2" /><path d="M4 9l2-3 2 3 2-3 3 2 3-1 2 2 2-3 3 2 3-1 2 2 2-3 3 2h8" stroke="#e01818" strokeWidth="1.200" /><path d="M4 17l2-2 2 3 2-3 3 1 3-1 2 2 2-3 3 2 3-1 2 2 2-3 3 2h8" stroke="#1818c8" strokeWidth="1.200" /><path d="M41.500 5v6" stroke="#e01818" /><path d="M41.500 13v6" stroke="#1818c8" /></Film></button>
        </div>
        <div className="mt-1 flex items-center gap-2">
          <button className={`${panelBtn} h-7 w-[92px] gap-[5px] text-[12px] font-bold text-[#0a6a0a]`}><svg width="6" height="12" viewBox="0 0 6 12"><path d="M0 0l6 6-6 6z" fill="#1c7d1a" /></svg>Пуск</button>
          <output className="text-[11px] whitespace-nowrap text-[#0a7a0a]">[ 00:00:19:797 ]</output>
        </div>
      </fieldset>
    </div>
  );
}

export default function App() {
  return (
    <div className="flex min-h-screen flex-col bg-[#f0f0f0] font-['DejaVu_Sans_Condensed',Tahoma,sans-serif] text-[11px] leading-[13px] text-black">
      <TitleBar />
      <nav className="flex h-[21px] items-center gap-[19px] pl-2">
        {MENU.map(([a, u, b]) => (
          <a key={u + b} href="#menu">{a}<u>{u}</u>{b}</a>
        ))}
      </nav>
      <Tabs />
      <Toolbar />
      <main className="flex">
        <SideBar />
        <div className="min-w-0 flex-1">
          <div className="border border-[#6a6a6a]"><Chart /></div>
          <ScrollRow />
        </div>
      </main>
      <div className="flex flex-1 flex-col items-center border-t border-white">
        <button aria-label="Свернуть панель" className="mt-[2px] flex h-[6px] w-[544px] items-center justify-between border border-[#a0a0a0] px-[6px]">
          <svg width="5" height="3" viewBox="0 0 5 3"><path d="M0 0h5L2.500 3z" fill="#2c86d8" /></svg>
          <span className="mx-1 flex-1 border-t border-dotted border-[#5ca4e4]" />
          <svg width="5" height="3" viewBox="0 0 5 3"><path d="M0 0h5L2.500 3z" fill="#2c86d8" /></svg>
        </button>
        <div className="mt-px flex items-stretch">
          <div className="mt-[2px] mr-[5px]"><ChannelPanel /></div>
          <div className="flex gap-1"><SweepPanel /><SyncPanel /><RightPanels /></div>
        </div>
      </div>
      <footer className="h-[17px] border-t border-b border-t-[#bcbcbc] border-b-[#4a6484] pl-1 leading-[15px]">X = 11,731; Y6 = 0,919</footer>
    </div>
  );
}
